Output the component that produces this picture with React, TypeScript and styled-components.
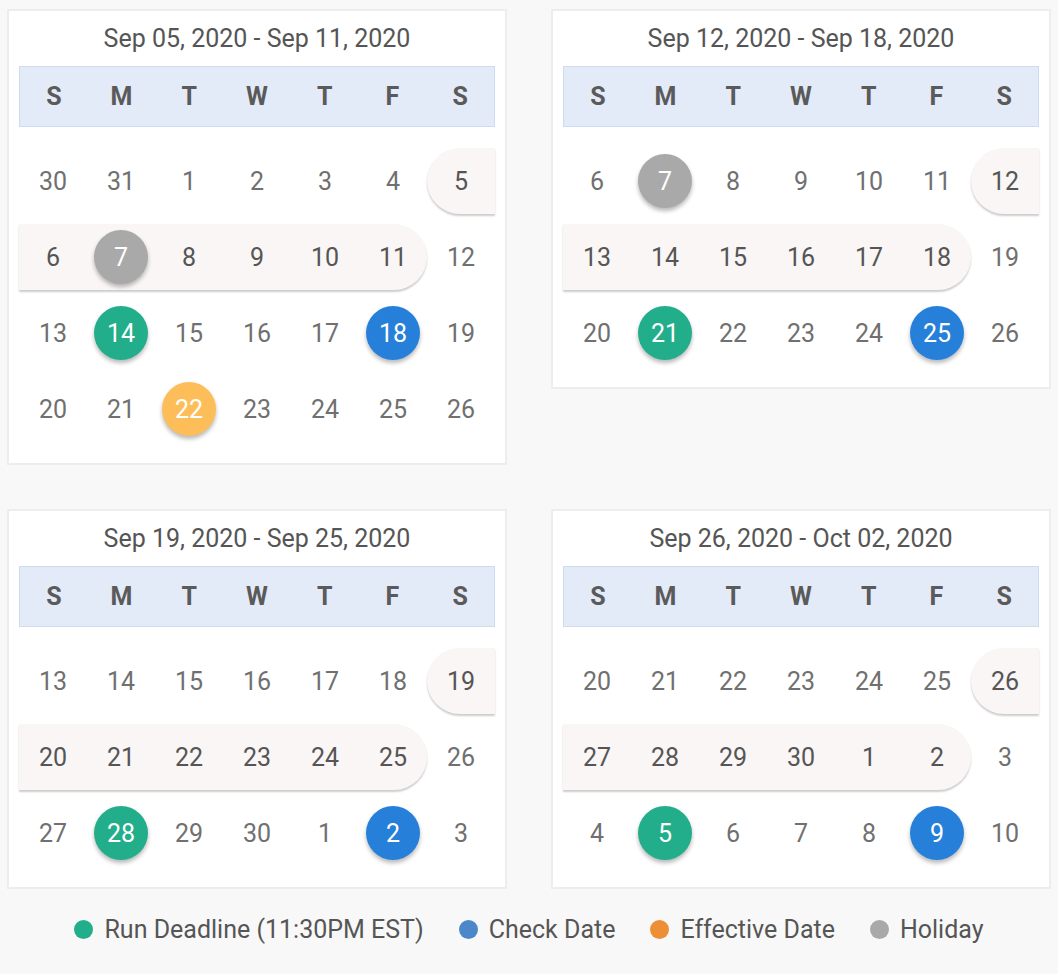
import styled, { createGlobalStyle } from "styled-components";

const GlobalStyle = createGlobalStyle`
  html, body {
    margin: 0;
    padding: 0;
    background: #f8f8f8;
    font-family: Roboto, "Open Sans", sans-serif;
  }
`;

const Page = styled.div`
  padding: 9px 7px 0;
`;

const Grid = styled.div`
  display: grid;
  grid-template-columns: 500px 500px;
  column-gap: 44px;
  row-gap: 44px;
  align-items: start;
`;

const Card = styled.section`
  box-sizing: border-box;
  background: #fff;
  border: 2px solid #ededed;
  padding: 0 10px 16px;
`;

const Title = styled.h2`
  margin: 0;
  height: 55px;
  display: flex;
  align-items: center;
  justify-content: center;
  box-sizing: border-box;
  font-size: 25px;
  font-weight: 400;
  color: #555;
`;

const WeekHeader = styled.div`
  display: grid;
  grid-template-columns: repeat(7, 1fr);
  height: 61px;
  box-sizing: border-box;
  background: #e3eaf8;
  border: 1px solid #cfdcef;
  margin-bottom: 16px;
`;

const DayName = styled.div`
  display: flex;
  align-items: center;
  justify-content: center;
  font-size: 25px;
  font-weight: 700;
  color: #5a5a5a;
`;

const Week = styled.div`
  display: grid;
  grid-template-columns: repeat(7, 1fr);
  grid-template-rows: 76px;
`;

const Band = styled.div<{ $from: number; $to: number; $round: "left" | "right" }>`
  grid-row: 1;
  grid-column: ${(p) => `${p.$from + 1} / ${p.$to + 2}`};
  align-self: center;
  height: 66px;
  background: #f9f6f5;
  border-radius: ${(p) => (p.$round === "left" ? "33px 0 0 33px" : "0 33px 33px 0")};
  box-shadow: 0 2px 2px rgba(0, 0, 0, 0.2);
`;

const Day = styled.div<{ $col: number; $inBand: boolean }>`
  grid-row: 1;
  grid-column: ${(p) => p.$col + 1};
  display: flex;
  align-items: center;
  justify-content: center;
  font-size: 25px;
  color: ${(p) => (p.$inBand ? "#555" : "#707070")};
  z-index: 1;
`;

const Dot = styled.span<{ $color: string }>`
  width: 54px;
  height: 54px;
  border-radius: 50%;
  background: ${(p) => p.$color};
  color: #fff;
  display: flex;
  align-items: center;
  justify-content: center;
  box-shadow: 0 3px 4px rgba(0, 0, 0, 0.28);
`;

const Legend = styled.div`
  display: flex;
  justify-content: center;
  align-items: center;
  gap: 35px;
  height: 80px;
`;

const LegendItem = styled.div`
  display: flex;
  align-items: center;
  gap: 11px;
  font-size: 25px;
  color: #555;
`;

const LegendDot = styled.span<{ $color: string }>`
  width: 19px;
  height: 19px;
  border-radius: 50%;
  background: ${(p) => p.$color};
`;

const COLORS = {
  green: "#22ae8a",
  blue: "#2680d9",
  yellow: "#fdbe5a",
  gray: "#a9a9a9",
};

type Mark = keyof typeof COLORS;

interface WeekData {
  days: number[];
  band?: [number, number, "left" | "right"];
  marks?: Record<number, Mark>;
}

interface CardData {
  title: string;
  weeks: WeekData[];
}

const range = (a: number, b: number) => Array.from({ length: b - a + 1 }, (_, i) => a + i);

const cards: CardData[] = [
  {
    title: "Sep 05, 2020 - Sep 11, 2020",
    weeks: [
      { days: [30, 31, 1, 2, 3, 4, 5], band: [6, 6, "left"] },
      { days: range(6, 12), band: [0, 5, "right"], marks: { 1: "gray" } },
      { days: range(13, 19), marks: { 1: "green", 5: "blue" } },
      { days: range(20, 26), marks: { 2: "yellow" } },
    ],
  },
  {
    title: "Sep 12, 2020 - Sep 18, 2020",
    weeks: [
      { days: range(6, 12), band: [6, 6, "left"], marks: { 1: "gray" } },
      { days: range(13, 19), band: [0, 5, "right"] },
      { days: range(20, 26), marks: { 1: "green", 5: "blue" } },
    ],
  },
  {
    title: "Sep 19, 2020 - Sep 25, 2020",
    weeks: [
      { days: range(13, 19), band: [6, 6, "left"] },
      { days: range(20, 26), band: [0, 5, "right"] },
      { days: [27, 28, 29, 30, 1, 2, 3], marks: { 1: "green", 5: "blue" } },
    ],
  },
  {
    title: "Sep 26, 2020 - Oct 02, 2020",
    weeks: [
      { days: range(20, 26), band: [6, 6, "left"] },
      { days: [27, 28, 29, 30, 1, 2, 3], band: [0, 5, "right"] },
      { days: range(4, 10), marks: { 1: "green", 5: "blue" } },
    ],
  },
];

const dayNames = ["S", "M", "T", "W", "T", "F", "S"];

const legend = [
  { label: "Run Deadline (11:30PM EST)", color: "#22ae8a" },
  { label: "Check Date", color: "#4a88c9" },
  { label: "Effective Date", color: "#ec8f35" },
  { label: "Holiday", color: "#a9a9a9" },
];

function WeekCard({ card }: { card: CardData }) {
  return (
    <Card>
      <Title>{card.title}</Title>
      <WeekHeader>
        {dayNames.map((d, i) => (
          <DayName key={i}>{d}</DayName>
        ))}
      </WeekHeader>
      {card.weeks.map((week, wi) => (
        <Week key={wi}>
          {week.band && <Band $from={week.band[0]} $to={week.band[1]} $round={week.band[2]} />}
          {week.days.map((day, col) => {
            const inBand = !!week.band && col >= week.band[0] && col <= week.band[1];
            const mark = week.marks?.[col];
            return (
              <Day key={col} $col={col} $inBand={inBand}>
                {mark ? <Dot $color={COLORS[mark]}>{day}</Dot> : day}
              </Day>
            );
          })}
        </Week>
      ))}
    </Card>
  );
}

export default function App() {
  return (
    <>
      <GlobalStyle />
      <Page>
        <Grid>
          {cards.map((c) => (
            <WeekCard key={c.title} card={c} />
          ))}
        </Grid>
        <Legend>
          {legend.map((l) => (
            <LegendItem key={l.label}>
              <LegendDot $color={l.color} />
              {l.label}
            </LegendItem>
          ))}
        </Legend>
      </Page>
    </>
  );
}
